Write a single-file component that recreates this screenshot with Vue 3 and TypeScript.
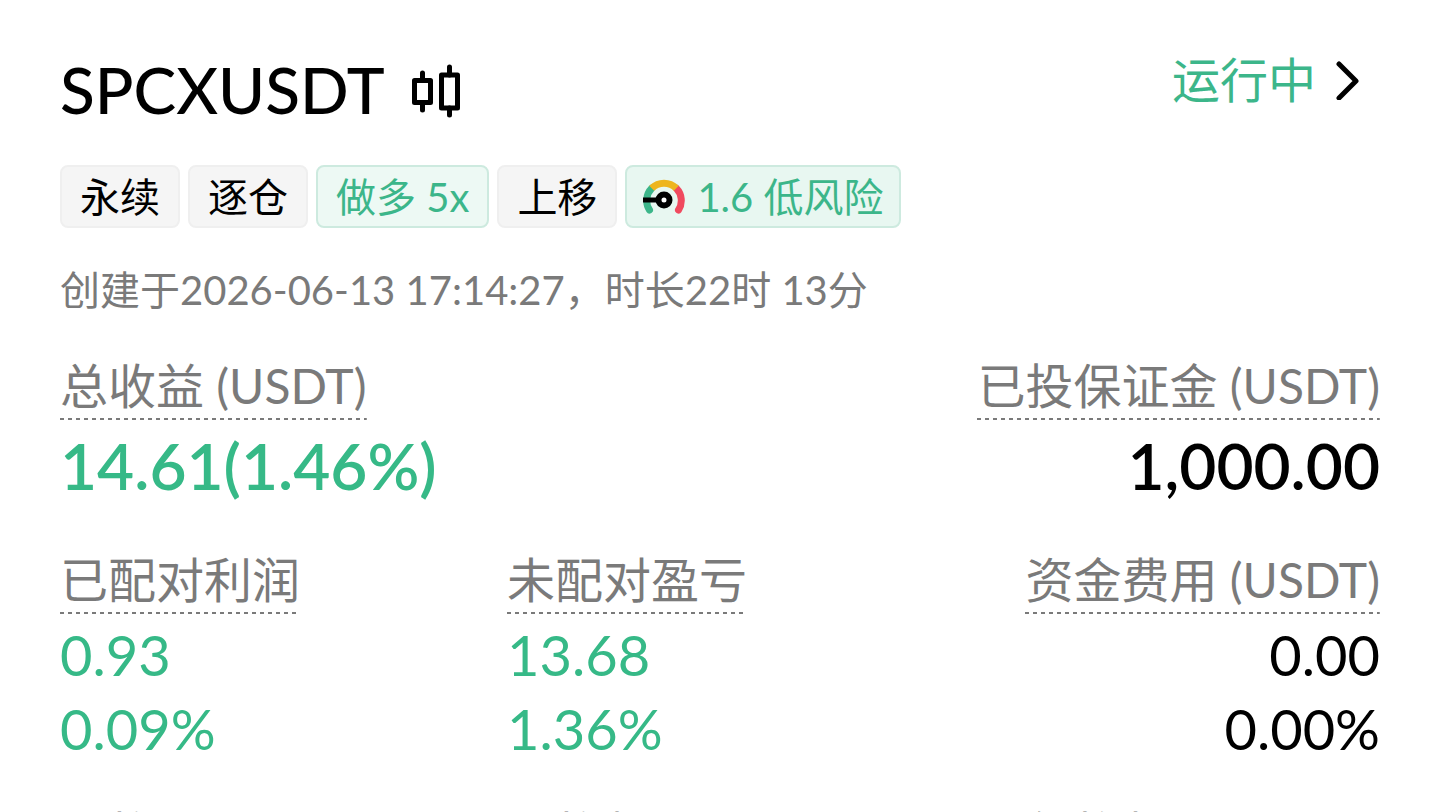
<script setup lang="ts">
interface Tag {
  text: string
  tone: 'neutral' | 'green' | 'risk'
}
interface Metric {
  label: string
  values: string[]
  green: boolean
}

const tags: Tag[] = [
  { text: '永续', tone: 'neutral' },
  { text: '逐仓', tone: 'neutral' },
  { text: '做多 5x', tone: 'green' },
  { text: '上移', tone: 'neutral' },
  { text: '1.6 低风险', tone: 'risk' },
]

const totals: Metric[] = [
  { label: '总收益 (USDT)', values: ['14.61(1.46%)'], green: true },
  { label: '已投保证金 (USDT)', values: ['1,000.00'], green: false },
]

const details: Metric[] = [
  { label: '已配对利润', values: ['0.93', '0.09%'], green: true },
  { label: '未配对盈亏', values: ['13.68', '1.36%'], green: true },
  { label: '资金费用 (USDT)', values: ['0.00', '0.00%'], green: false },
]

const settings: string[] = ['价格区间', '网格数量', '每格数量 (USDT)']
</script>

<template>
  <main class="card">
    <header class="head">
      <div class="pair">
        <h1 class="symbol">SPCXUSDT</h1>
        <svg class="candles" viewBox="0 0 52 56" aria-hidden="true">
          <g fill="none" stroke="#000" stroke-width="5" stroke-linecap="round" stroke-linejoin="round">
            <rect x="3.500" y="18.500" width="16" height="22" />
            <path d="M11.500 11v7.500M11.500 40.500v7.500" />
            <rect x="30.500" y="13" width="16" height="33" />
            <path d="M38.500 5v8M38.500 46v7" />
          </g>
        </svg>
      </div>
      <a class="status" href="#">
        <span>运行中</span>
        <svg class="chevron" viewBox="0 0 24 40" aria-hidden="true">
          <path d="M3 4L20 21L3 38" fill="none" stroke="#000" stroke-width="5" stroke-linecap="round" stroke-linejoin="round" />
        </svg>
      </a>
    </header>

    <ul class="tags">
      <li v-for="tag in tags" :key="tag.text" class="tag" :class="tag.tone">
        <svg v-if="tag.tone === 'risk'" class="gauge" viewBox="0 0 42 36" aria-hidden="true">
          <g fill="none" stroke-width="7" stroke-linecap="round">
            <path d="M6.500 31A17.500 17.500 0 0 1 8.700 9.300" stroke="#3cb68a" />
            <path d="M35.500 31A17.500 17.500 0 0 0 33.300 9.300" stroke="#f04a5f" />
            <path d="M8.700 9.300A17.500 17.500 0 0 1 33.300 9.300" stroke="#eeb51e" stroke-linecap="butt" />
          </g>
          <path d="M0 21H15" stroke="#000" stroke-width="5" />
          <circle cx="21" cy="21" r="5.500" fill="#fff" stroke="#000" stroke-width="6" />
        </svg>
        <span>{{ tag.text }}</span>
      </li>
    </ul>

    <p class="created">创建于2026-06-13 17:14:27，时长22时 13分</p>

    <dl class="totals">
      <div v-for="m in totals" :key="m.label" class="metric">
        <dt class="label">{{ m.label }}</dt>
        <dd v-for="v in m.values" :key="v" class="total" :class="{ up: m.green }">{{ v }}</dd>
      </div>
    </dl>

    <dl class="details">
      <div v-for="m in details" :key="m.label" class="metric">
        <dt class="label">{{ m.label }}</dt>
        <dd v-for="v in m.values" :key="v" class="value" :class="{ up: m.green }">{{ v }}</dd>
      </div>
    </dl>

    <dl class="details settings">
      <div v-for="s in settings" :key="s" class="metric">
        <dt class="label">{{ s }}</dt>
      </div>
    </dl>
  </main>
</template>

<style>
body {
  background: #fff;
}
</style>

<style scoped>
.card {
  box-sizing: border-box;
  max-height: 100vh;
  overflow: hidden;
  padding: 50px 60px 0;
  color: #000;
  font-family: Lato, 'Noto Sans CJK SC', sans-serif;
}
h1, p, ul, dl, dd {
  margin: 0;
  padding: 0;
}
.head {
  display: flex;
  justify-content: space-between;
  align-items: flex-start;
}
.pair {
  display: flex;
  align-items: center;
  gap: 26px;
}
.symbol {
  font-size: 64px;
  line-height: 80px;
  font-weight: 500;
}
.candles {
  width: 52px;
  height: 56px;
}
.status {
  display: flex;
  align-items: center;
  gap: 20px;
  padding-right: 20px;
  color: #3cb68a;
  font-size: 48px;
  line-height: 60px;
  text-decoration: none;
}
.chevron {
  width: 24px;
  height: 40px;
}
.tags {
  display: flex;
  gap: 8px;
  margin-top: 35px;
  list-style: none;
}
.tag {
  display: flex;
  align-items: center;
  box-sizing: border-box;
  height: 63px;
  padding: 0 18px;
  border: 2px solid #efefef;
  border-radius: 8px;
  background: #f5f5f5;
  font-size: 40px;
  line-height: 60px;
}
.tag.green,
.tag.risk {
  border-color: #cdeadf;
  background: #edf9f4;
  color: #3cb68a;
}
.tag.risk {
  gap: 12px;
  padding: 0 16px;
  background: #e8f7f1;
}
.gauge {
  width: 42px;
  height: 36px;
}
.created {
  margin-top: 32px;
  color: #7a7a7a;
  font-size: 40px;
  line-height: 60px;
}
.totals,
.details {
  display: grid;
}
.totals {
  grid-template-columns: 1fr 1fr;
  margin-top: 36px;
}
.details {
  grid-template-columns: 447fr 447fr 426fr;
  margin-top: 44px;
}
.settings {
  margin-top: 38px;
}
.metric {
  display: flex;
  flex-direction: column;
  align-items: flex-start;
}
.metric:last-child {
  align-items: flex-end;
}
.label {
  box-sizing: border-box;
  height: 64px;
  color: #7a7a7a;
  font-size: 48px;
  line-height: 60px;
  white-space: nowrap;
  background: repeating-linear-gradient(90deg, #7a7a7a 0 4px, transparent 4px 8px) bottom / 100% 2px no-repeat;
}
.total {
  margin-top: 6px;
  font-size: 64px;
  line-height: 80px;
  font-weight: 600;
}
.value {
  font-size: 56px;
  line-height: 74px;
}
.label + .value {
  margin-top: 4px;
}
.up {
  color: #36b987;
}
</style>
